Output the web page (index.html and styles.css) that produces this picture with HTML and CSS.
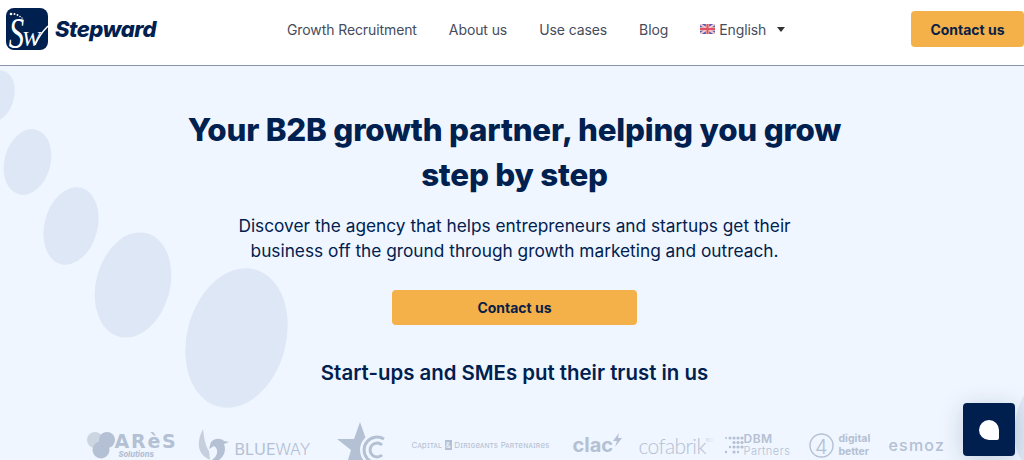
FILE: index.html
```html
<!DOCTYPE html>
<html lang="en">
<head>
    <meta charset="UTF-8">
    <meta name="viewport" content="width=device-width, initial-scale=1.0">
    <title>Stepward</title>
    <link rel="stylesheet" href="styles.css">
</head>
<body>
    <header class="topbar">
        <a class="brand" href="#">
            <svg class="brand-mark" viewBox="0 0 42 42" aria-hidden="true">
                <rect width="42" height="42" rx="8" fill="#00204f"/>
                <circle cx="5" cy="6" r="1.3" fill="#fff"/>
                <circle cx="8.5" cy="6" r="1" fill="#fff"/>
                <circle cx="11.5" cy="7" r="0.9" fill="#fff"/>
                <circle cx="14" cy="8.5" r="0.8" fill="#fff"/>
                <circle cx="16" cy="10" r="0.7" fill="#fff"/>
                <path d="M29 37 C32 30 36 24 42 18" fill="none" stroke="#fff" stroke-width="1.5"/>
                <text x="4" y="40" class="mark-s" transform="scale(0.7 1)">S</text>
                <text x="16" y="38" class="mark-w">W</text>
            </svg>
            <span class="brand-name">Stepward</span>
        </a>
        <nav class="menu">
            <a href="#">Growth Recruitment</a>
            <a href="#">About us</a>
            <a href="#">Use cases</a>
            <a href="#">Blog</a>
            <a href="#" class="lang">
                <svg class="flag" viewBox="0 0 15 10" aria-hidden="true">
                    <rect width="15" height="10" rx="1" fill="#4a5fb0"/>
                    <path d="M0 0L15 10M15 0L0 10" stroke="#f4c6cc" stroke-width="2"/>
                    <path d="M7.5 0V10M0 5H15" stroke="#f4c6cc" stroke-width="3.4"/>
                    <path d="M7.5 0V10M0 5H15" stroke="#e0525f" stroke-width="2"/>
                </svg>
                English
                <span class="caret"></span>
            </a>
        </nav>
        <a class="btn btn-top" href="#">Contact us</a>
    </header>

    <main class="hero">
        <svg class="dots" viewBox="0 0 1024 394" aria-hidden="true">
            <ellipse cx="-3" cy="30" rx="17" ry="26" transform="rotate(15 -3 30)"/>
            <ellipse cx="27.5" cy="96" rx="23" ry="33.5" transform="rotate(15 27.5 96)"/>
            <ellipse cx="71" cy="160" rx="26.5" ry="39.5" transform="rotate(15 71 160)"/>
            <ellipse cx="133" cy="219" rx="37" ry="53.5" transform="rotate(15 133 219)"/>
            <ellipse cx="236.5" cy="272" rx="49.5" ry="71" transform="rotate(15 236.5 272)"/>
            <ellipse cx="1046" cy="354" rx="30" ry="50" transform="rotate(15 1046 354)"/>
        </svg>

        <h1>Your B2B growth partner, helping you grow<br>step by step</h1>
        <p class="lead">Discover the agency that helps entrepreneurs and startups get their<br>business off the ground through growth marketing and outreach.</p>
        <a class="btn btn-hero" href="#">Contact us</a>
        <h2>Start-ups and SMEs put their trust in us</h2>

        <div class="logos">
            <div class="logo logo-ares">
                <svg width="32" height="28" viewBox="0 0 32 28" aria-hidden="true">
                    <circle cx="8" cy="9" r="8" fill="#ccd6e3"/>
                    <circle cx="14" cy="19" r="8.5"/>
                    <circle cx="20" cy="9" r="8"/>
                </svg>
                <div class="ares-text"><b>ARèS</b><i>Solutions</i></div>
            </div>
            <div class="logo logo-blueway">
                <svg width="31" height="32" viewBox="0 0 31 32" aria-hidden="true">
                    <path fill="#c5cfdd" d="M5 0C2 6 0 12 1 18C2 24 6 28 12 31L11 22C7 16 6 8 5 0Z"/>
                    <path d="M13 13C18 8 24 10 26 12L31 13L26 15C28 20 27 27 21 31L14 31C20 27 21 20 16 17L11 20Z"/>
                </svg>
                <span>BLUE<em>WAY</em></span>
            </div>
            <div class="logo logo-star">
                <svg width="50" height="48" viewBox="0 0 50 48" aria-hidden="true">
                    <path d="M23 0L29 17H45L34 27L40 48H8L14 28L0 17H17Z"/>
                    <circle cx="40" cy="28" r="17" fill="#eff6ff"/>
                    <path d="M47 17A13 13 0 1 0 47 39M45 23A7 7 0 1 0 45 33" fill="none" stroke="#b4c0d3" stroke-width="3"/>
                </svg>
            </div>
            <div class="logo logo-capital">Capital <span>&amp;</span> Dirigeants Partenaires</div>
            <div class="logo logo-clac">clac<svg width="9" height="14" viewBox="0 0 9 14" aria-hidden="true"><path d="M6 0L0 8H4L2 14L9 5H5Z"/></svg></div>
            <div class="logo logo-cofabrik">cofabrik<sup>RH</sup></div>
            <div class="logo logo-dbm">
                <svg width="20" height="20" viewBox="0 0 20 20" aria-hidden="true">
                    <circle cx="2" cy="3" r="1"/><circle cx="6" cy="3" r="1.5"/><circle cx="10" cy="3" r="1.6"/><circle cx="14" cy="3" r="1.6"/><circle cx="18" cy="3" r="1.6"/>
                    <circle cx="10" cy="7.5" r="1.6"/><circle cx="14" cy="7.5" r="1.6"/><circle cx="18" cy="7.5" r="1.6"/>
                    <circle cx="6" cy="12" r="1.2"/><circle cx="10" cy="12" r="1.6"/><circle cx="14" cy="12" r="1.6"/><circle cx="18" cy="12" r="1.6"/>
                    <circle cx="2" cy="17" r="1.2"/><circle cx="10" cy="17" r="1.6"/><circle cx="14" cy="17" r="1.2"/>
                </svg>
                <div class="dbm-text"><b>DBM</b><span>Partners</span></div>
            </div>
            <div class="logo logo-digital">
                <svg width="25" height="25" viewBox="0 0 25 25" aria-hidden="true">
                    <circle cx="12.5" cy="12.5" r="11.5" fill="none" stroke="#b4c0d3" stroke-width="1.4"/>
                    <text x="6" y="21" class="digital-four">4</text>
                </svg>
                <div class="digital-text">digital<br>better</div>
            </div>
            <div class="logo logo-esmoz">esmoz</div>
        </div>

        <button class="chat" aria-label="Chat"><span></span></button>
    </main>
</body>
</html>
```

FILE: styles.css
```css
html, body {
    margin: 0;
    padding: 0;
    height: 100%;
    overflow: hidden;
}
body {
    font-family: Inter, "Noto Sans", sans-serif;
    background-color: #eff6ff;
    color: #00204f;
}
a {
    text-decoration: none;
    color: inherit;
}

/* top bar */
.topbar {
    height: 65px;
    background: white;
    border-bottom: 1px solid #8a94ad;
    display: flex;
    align-items: center;
    padding-left: 6px;
}
.brand {
    display: flex;
    align-items: center;
    gap: 7px;
    width: 281px;
}
.brand-mark {
    width: 42px;
    height: 42px;
    margin-top: -7px;
    overflow: visible;
}
.mark-s {
    font-family: "Liberation Serif", serif;
    font-style: italic;
    font-size: 44px;
    fill: white;
}
.mark-w {
    font-family: "Liberation Serif", serif;
    font-style: italic;
    font-size: 22px;
    fill: white;
}
.brand-name {
    font-size: 22px;
    font-weight: 800;
    font-style: italic;
    letter-spacing: -0.5px;
    color: #00204f;
    margin-top: -7px;
}
.menu {
    display: flex;
    align-items: center;
    gap: 32px;
    font-size: 14px;
    color: #454c5c;
    letter-spacing: -0.1px;
    margin-top: -7px;
}
.lang {
    display: flex;
    align-items: center;
    gap: 4px;
}
.flag {
    width: 15px;
    height: 10px;
}
.caret {
    width: 0;
    height: 0;
    margin-left: 7px;
    border-left: 4px solid transparent;
    border-right: 4px solid transparent;
    border-top: 5px solid #333;
}
.btn {
    display: flex;
    align-items: center;
    justify-content: center;
    background: #f4b14a;
    border-radius: 4px;
    font-size: 14px;
    font-weight: 700;
    color: #0a1f46;
}
.btn-top {
    width: 113px;
    height: 36px;
    margin-left: auto;
    margin-top: -7px;
}

/* hero */
.hero {
    position: relative;
    height: 394px;
    overflow: hidden;
    display: flex;
    flex-direction: column;
    align-items: center;
    padding: 42px 0 0 5px;
    box-sizing: border-box;
}
.dots {
    position: absolute;
    left: 0;
    top: 0;
    width: 1024px;
    height: 394px;
    fill: #dde7f5;
}
h1, .lead, .btn-hero, h2, .logos {
    position: relative;
    flex: none;
}
h1 {
    margin: 0;
    font-size: 31.3px;
    line-height: 45px;
    font-weight: 800;
    text-align: center;
    letter-spacing: -0.2px;
}
.lead {
    margin: 15px 0 0;
    font-size: 17.3px;
    line-height: 25px;
    text-align: center;
}
.btn-hero {
    width: 245px;
    height: 35px;
    margin-top: 27px;
}
h2 {
    margin: 32px 0 0;
    font-size: 20.4px;
    line-height: 32px;
    font-weight: 600;
}

/* partner logos */
.logos {
    display: flex;
    align-items: center;
    gap: 20px;
    margin-top: 32px;
    width: 856px;
    height: 48px;
    color: #b4c0d3;
    fill: #b4c0d3;
}
.logo {
    display: flex;
    align-items: center;
    flex: none;
}
.logo svg {
    flex: none;
}
.logo-ares {
    width: 91px;
}
.ares-text b {
    display: block;
    font-family: "DejaVu Sans", sans-serif;
    font-weight: 700;
    font-size: 19px;
    line-height: 19px;
    letter-spacing: 1.8px;
    margin-left: -4px;
    white-space: nowrap;
}
.ares-text i {
    display: block;
    font-size: 7.5px;
    font-weight: 800;
    line-height: 8px;
}
.logo-blueway {
    width: 114px;
    gap: 6px;
    align-items: flex-end;
    font-size: 16px;
    line-height: 16px;
}
.logo-blueway span {
    padding-bottom: 4px;
}
.logo-blueway em {
    font-style: normal;
    font-weight: 300;
}
.logo-star {
    width: 50px;
    margin-left: 5px;
    padding-top: 2px;
}
.logo-capital {
    width: 141px;
    margin-left: 5px;
    font-size: 8px;
    font-variant: small-caps;
    white-space: pre;
    letter-spacing: 0.2px;
}
.logo-capital span {
    background: #b4c0d3;
    color: #eff6ff;
    padding: 0 1px;
}
.logo-clac {
    width: 48px;
    font-size: 20px;
    font-weight: 700;
    align-items: flex-start;
}
.logo-cofabrik {
    width: 68px;
    margin-left: -2px;
    font-family: Lato, sans-serif;
    font-size: 21px;
    font-weight: 300;
    letter-spacing: -0.6px;
}
.logo-cofabrik sup {
    font-size: 5px;
    margin-bottom: 10px;
    letter-spacing: 0;
}
.logo-dbm {
    width: 68px;
    margin-left: -3px;
    gap: 0;
}
.dbm-text b {
    display: block;
    font-size: 12px;
    font-weight: 600;
    line-height: 13px;
    letter-spacing: 0.5px;
}
.dbm-text span {
    display: block;
    font-size: 11px;
    font-weight: 300;
    line-height: 13px;
    letter-spacing: 0.5px;
}
.logo-digital {
    width: 64px;
    margin-left: -3px;
    gap: 5px;
}
.digital-four {
    font-size: 20px;
    font-weight: 300;
    fill: #b4c0d3;
}
.digital-text {
    font-size: 10.5px;
    font-weight: 700;
    line-height: 13px;
}
.logo-esmoz {
    width: 55px;
    margin-left: -4px;
    font-size: 16px;
    font-weight: 500;
    letter-spacing: 1.2px;
}

/* chat launcher */
.chat {
    position: absolute;
    left: 963px;
    top: 337px;
    width: 52px;
    height: 53px;
    border: 0;
    border-radius: 4px;
    background: #001f4f;
    box-shadow: 0 4px 24px rgba(0, 32, 79, 0.18);
    display: flex;
    align-items: center;
    justify-content: center;
}
.chat span {
    width: 20px;
    height: 20px;
    background: white;
    border-radius: 50% 50% 2px 50%;
}
```
